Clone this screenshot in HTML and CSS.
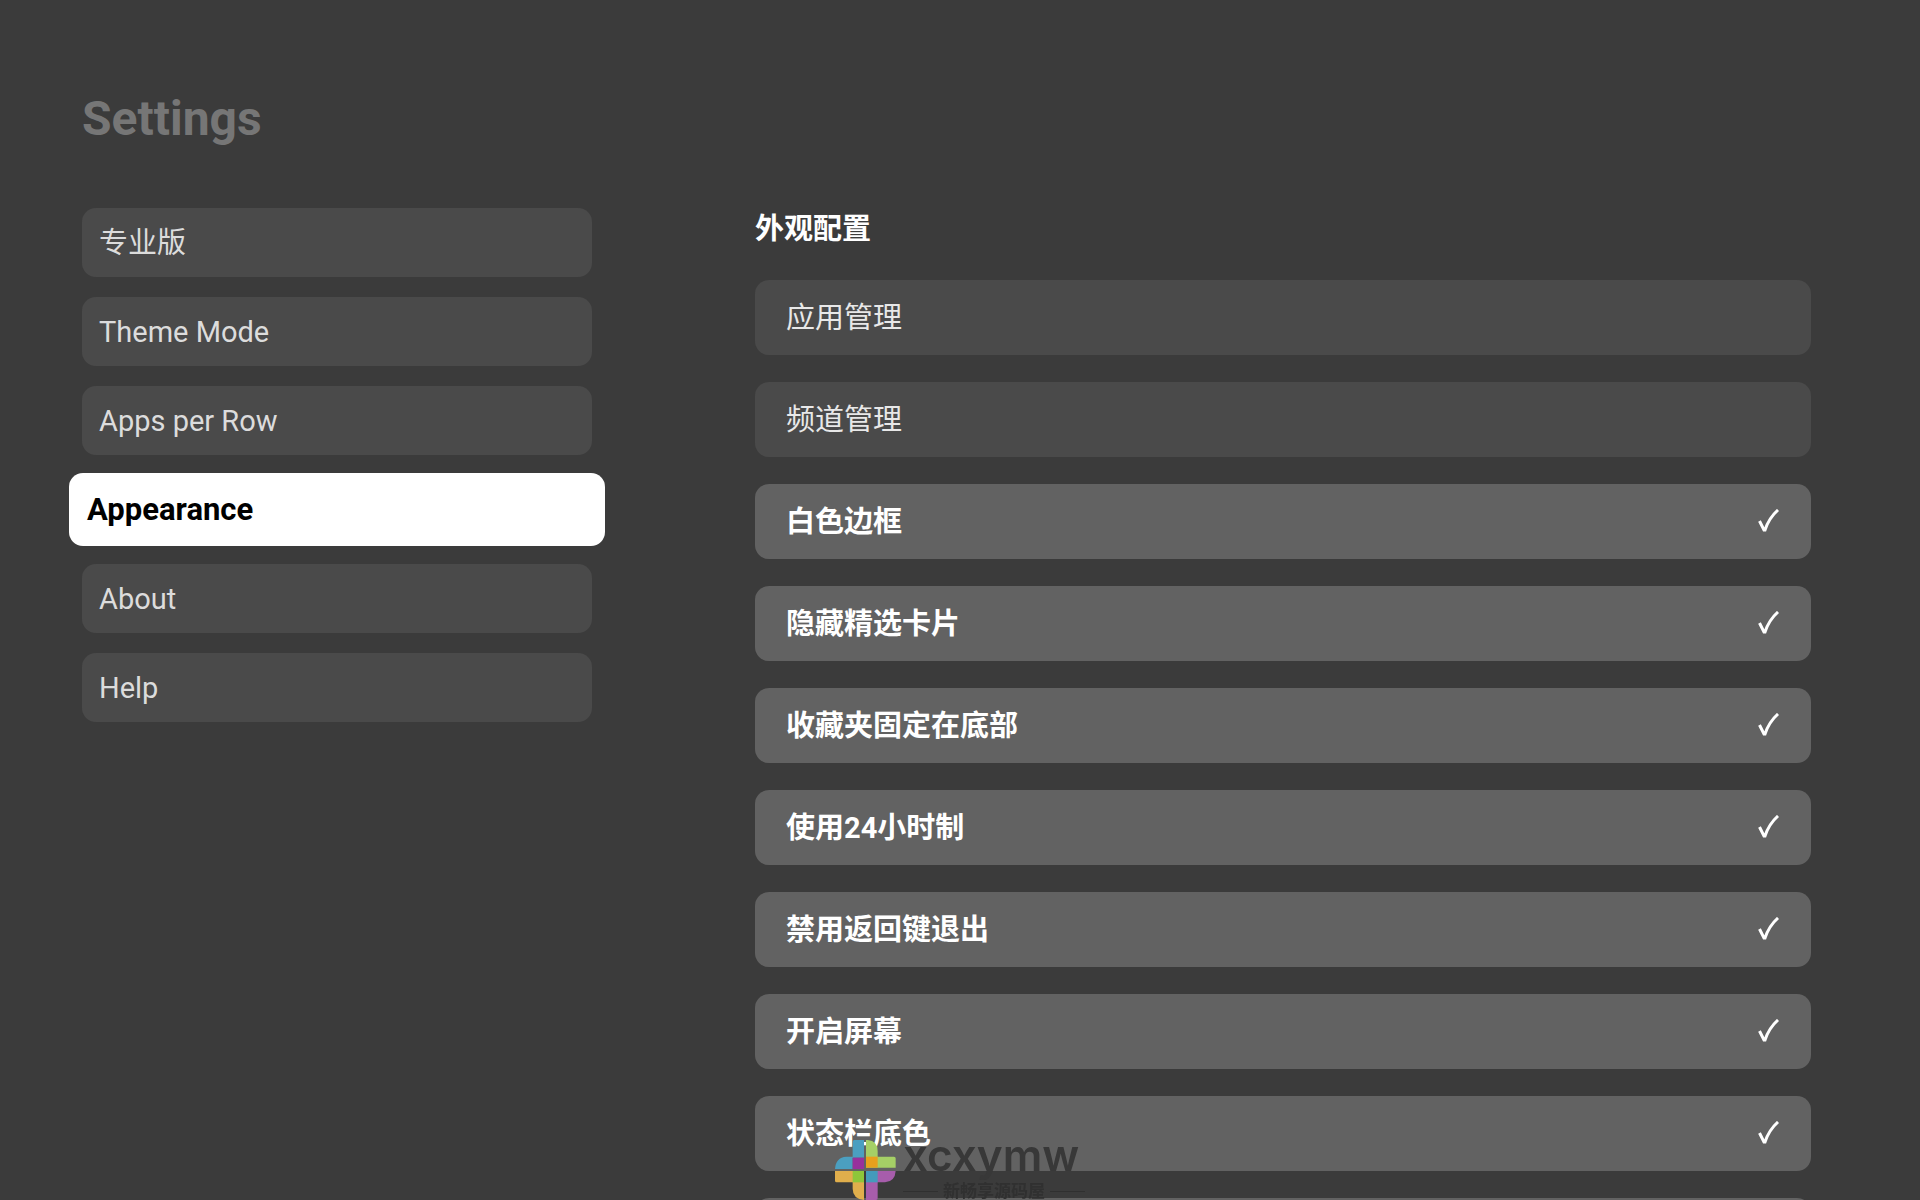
FILE: index.html
```html
<!DOCTYPE html>
<html lang="zh-CN">
  <head>
    <meta charset="UTF-8" />
    <meta name="viewport" content="width=device-width, initial-scale=1.0" />
    <title>Settings</title>
    <link rel="stylesheet" href="styles.css">
  </head>
  <body>
    <svg width="0" height="0" class="sprite" aria-hidden="true">
      <symbol id="check" viewBox="0 0 28 28">
        <path d="M7.500 12L12 21H13Q17 9 26 1" />
      </symbol>
    </svg>

    <div class="container">
      <h1 class="page-title">Settings</h1>

      <nav class="menu">
        <button type="button" class="menu-item">专业版</button>
        <button type="button" class="menu-item">Theme Mode</button>
        <button type="button" class="menu-item">Apps per Row</button>
        <button type="button" class="menu-item active">Appearance</button>
        <button type="button" class="menu-item">About</button>
        <button type="button" class="menu-item">Help</button>
      </nav>

      <main class="panel">
        <h2 class="panel-title">外观配置</h2>
        <button type="button" class="row">应用管理</button>
        <button type="button" class="row">频道管理</button>
        <label class="row option">
          白色边框
          <span class="tick"><input type="checkbox" name="border" checked /><svg><use href="#check" /></svg></span>
        </label>
        <label class="row option">
          隐藏精选卡片
          <span class="tick"><input type="checkbox" name="featured" checked /><svg><use href="#check" /></svg></span>
        </label>
        <label class="row option">
          收藏夹固定在底部
          <span class="tick"><input type="checkbox" name="favorites" checked /><svg><use href="#check" /></svg></span>
        </label>
        <label class="row option">
          使用24小时制
          <span class="tick"><input type="checkbox" name="clock24" checked /><svg><use href="#check" /></svg></span>
        </label>
        <label class="row option">
          禁用返回键退出
          <span class="tick"><input type="checkbox" name="back" checked /><svg><use href="#check" /></svg></span>
        </label>
        <label class="row option">
          开启屏幕
          <span class="tick"><input type="checkbox" name="screen" checked /><svg><use href="#check" /></svg></span>
        </label>
        <label class="row option">
          状态栏底色
          <span class="tick"><input type="checkbox" name="statusbar" checked /><svg><use href="#check" /></svg></span>
        </label>
        <div class="row option"></div>
      </main>
    </div>

    <div class="watermark">
      <svg class="logo" viewBox="0 0 183 180" aria-hidden="true">
        <path fill="#4b9fc0" d="M58 0H87V53H53V87H0Q2 52 34 50H53V5Q53 0 58 0Z" />
        <path fill="#a5cf66" d="M93 0H98Q128 2 128 34V50H177Q182 50 182 55V83H93Z" />
        <path fill="#e0ae4c" d="M0 93H87V180Q53 176 53 146V127H5Q0 127 0 122Z" />
        <path fill="#a75dab" d="M93 93H182Q180 125 150 127H128V175Q128 180 123 180H93Z" />
        <path fill="#98309c" d="M53 53H87V87H53Z" />
        <path fill="#e8a01c" d="M93 50H128V83H93Z" />
        <path fill="#8dc63a" d="M53 93H87V127H53Z" />
        <path fill="#449abb" d="M93 93H128V127H93Z" />
      </svg>
      <div class="brand">
        <span class="brand-name">xcxymw</span>
        <span class="brand-sub">新畅享源码屋</span>
      </div>
    </div>
  </body>
</html>
```
FILE: styles.css
```css
* {
  box-sizing: border-box;
}
body {
  margin: 0;
  height: 100vh;
  overflow: hidden;
  background-color: #3b3b3b;
  color: #fff;
  font-family: Roboto, 'Noto Sans CJK SC', sans-serif;
  font-size: 29px;
}
.sprite {
  position: absolute;
}

.container {
  display: grid;
  grid-template-columns: 510fr 1056fr;
  column-gap: 163px;
  align-items: start;
  padding: 91px 109px 0 82px;
}
.page-title {
  grid-column: 1 / -1;
  margin: 0 0 61px;
  font-size: 48px;
  line-height: 56px;
  color: #767676;
}

.menu {
  display: flex;
  flex-direction: column;
  gap: 20px;
}
.menu-item,
.row {
  border: none;
  border-radius: 14px;
  background-color: #4a4a4a;
  color: #dcdcdc;
  font: inherit;
  line-height: 35px;
  text-align: left;
}
.menu-item {
  height: 69px;
  padding: 1px 17px 0;
}
/* the selected entry stands out past its neighbours */
.menu-item.active {
  height: 73px;
  margin: -2px -13px;
  padding: 0 18px;
  background-color: #fff;
  color: #000;
  font-size: 31px;
  font-weight: bold;
}

.panel {
  display: flex;
  flex-direction: column;
  gap: 27px;
}
.panel-title {
  margin: 0;
  padding-bottom: 2px;
  font-size: 29px;
  line-height: 43px;
}
.row {
  height: 75px;
  flex-shrink: 0;
  padding: 2px 31px 0;
  color: #e8e8e8;
}
.option {
  display: flex;
  align-items: center;
  justify-content: space-between;
  background-color: #626262;
  color: #fff;
  font-weight: bold;
}
.tick {
  display: grid;
}
.tick input,
.tick svg {
  grid-area: 1 / 1;
  width: 28px;
  height: 28px;
  margin: 0;
}
.tick input {
  appearance: none;
}
.tick svg {
  overflow: visible;
  fill: none;
  stroke: #fff;
  stroke-width: 3;
  visibility: hidden;
  pointer-events: none;
}
.tick input:checked + svg {
  visibility: visible;
}

.watermark {
  position: fixed;
  left: 50%;
  bottom: 0;
  display: flex;
  gap: 7px;
  margin-left: -125px;
  color: #383838;
}
.logo {
  width: 61px;
  height: 60px;
}
.brand {
  display: flex;
  flex-direction: column;
  min-width: 182px;
  height: 60px;
}
.brand-name {
  font-family: Inter, sans-serif;
  font-size: 44px;
  font-weight: 600;
  line-height: 30px;
}
.brand-sub {
  display: flex;
  align-items: center;
  gap: 5px;
  margin-top: 12px;
  font-size: 17px;
  font-weight: bold;
  line-height: 18px;
  color: #303030;
}
.brand-sub::before,
.brand-sub::after {
  content: '';
  flex: 1;
  height: 1px;
  background-color: #303030;
}
```
